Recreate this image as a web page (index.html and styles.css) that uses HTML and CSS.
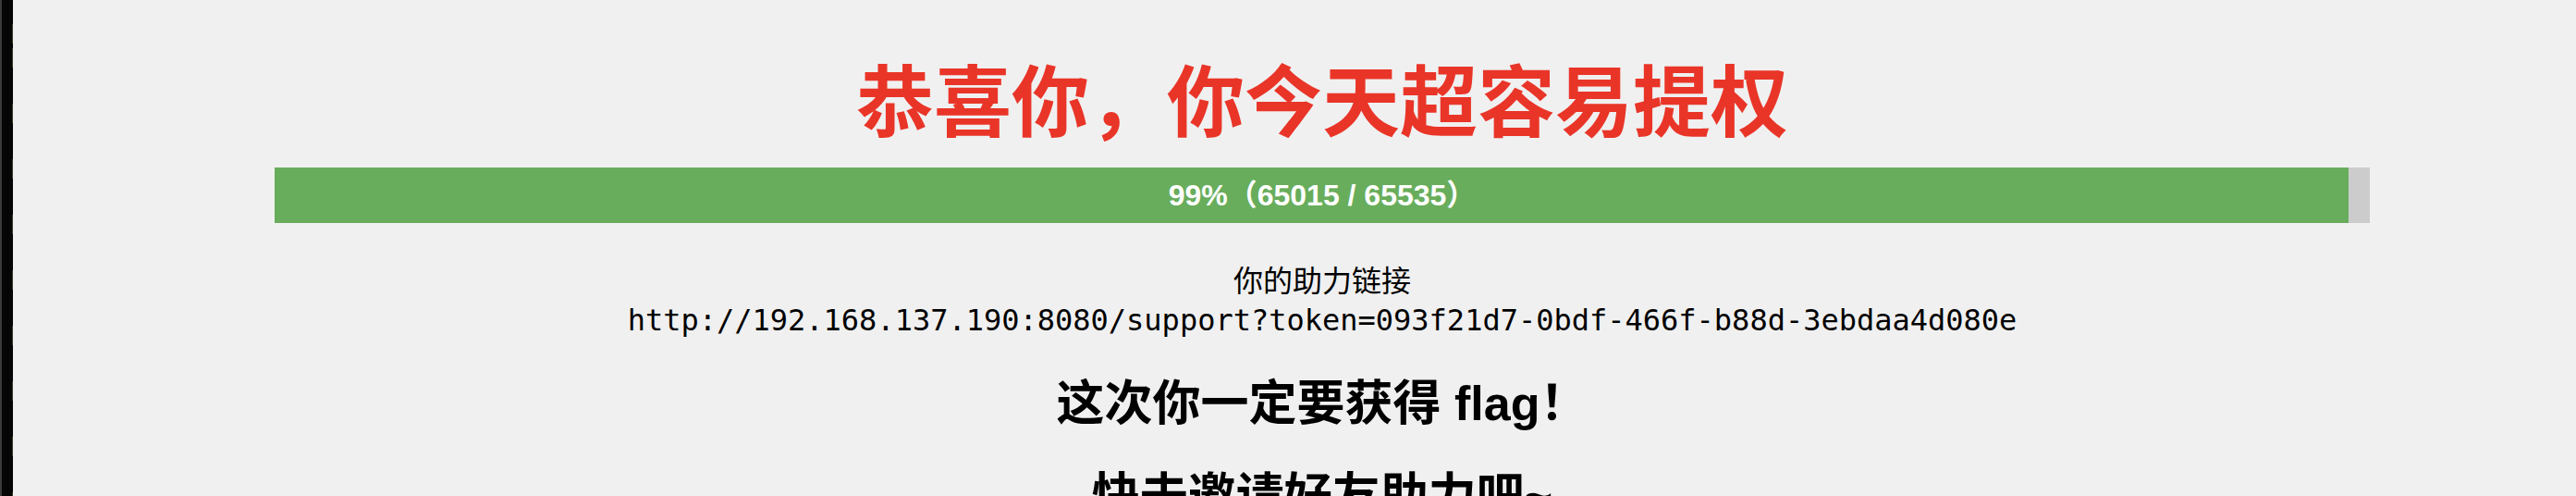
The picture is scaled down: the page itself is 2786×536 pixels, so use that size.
FILE: index.html
```html
<!DOCTYPE html>
<html lang="zh-CN">
<head>
    <meta charset="UTF-8">
    <meta name="viewport" content="width=device-width, initial-scale=1.0">
    <title>助力提权</title>
    <link rel="stylesheet" href="styles.css">
</head>
<body>
    <div class="page">
        <div class="edge"></div>
        <main class="main">
            <h1 class="title">恭喜你，你今天超容易提权</h1>
            <div class="progress">
                <div class="progress-fill" style="width: 99%;"></div>
                <div class="progress-text">99%（65015 / 65535）</div>
            </div>
            <div class="share-label">你的助力链接</div>
            <div class="share-link">http://192.168.137.190:8080/support?token=093f21d7-0bdf-466f-b88d-3ebdaa4d080e</div>
            <h2 class="slogan">这次你一定要获得 flag！</h2>
            <h2 class="slogan">快去邀请好友助力吧~</h2>
        </main>
    </div>
</body>
</html>
```

FILE: styles.css
```css
body {
    margin: 0;
    background: #f0f0f0;
    color: #000;
    font-family: "Liberation Sans", "Noto Sans CJK SC", sans-serif;
}
.page {
    display: flex;
    min-height: 100vh;
}
.edge {
    width: 14px;
    flex-shrink: 0;
    background:
        linear-gradient(to right, #3a3a3a 0 2px, #050505 2px 13px, transparent 13px),
        repeating-linear-gradient(to bottom, #3b3b26 0 21px, #050505 21px 60px);
    background-position: 0 0, 0 52px;
}
.main {
    flex: 1;
    padding: 55px 0 0 60px;
    text-align: center;
}
.title {
    margin: 0;
    font-family: "Noto Sans CJK SC", sans-serif;
    font-size: 84px;
    line-height: 100px;
    font-weight: 700;
    color: #e93528;
}
.progress {
    display: grid;
    width: 2266px;
    height: 60px;
    margin: 26px auto 0;
    background: #ccc;
}
.progress-fill, .progress-text {
    grid-area: 1 / 1;
}
.progress-fill {
    justify-self: start;
    background: #68ad5c;
}
.progress-text {
    color: #fff;
    font-size: 32px;
    font-weight: bold;
    line-height: 60px;
}
.share-label {
    margin-top: 40px;
    font-family: "Noto Sans CJK SC", sans-serif;
    font-size: 32px;
    line-height: 40px;
}
.share-link {
    margin-top: 5px;
    font-family: "DejaVu Sans Mono", monospace;
    font-size: 32px;
    line-height: 40px;
}
.slogan {
    margin: 40px 0 0;
    font-size: 52px;
    line-height: 60px;
    font-weight: bold;
}
```
